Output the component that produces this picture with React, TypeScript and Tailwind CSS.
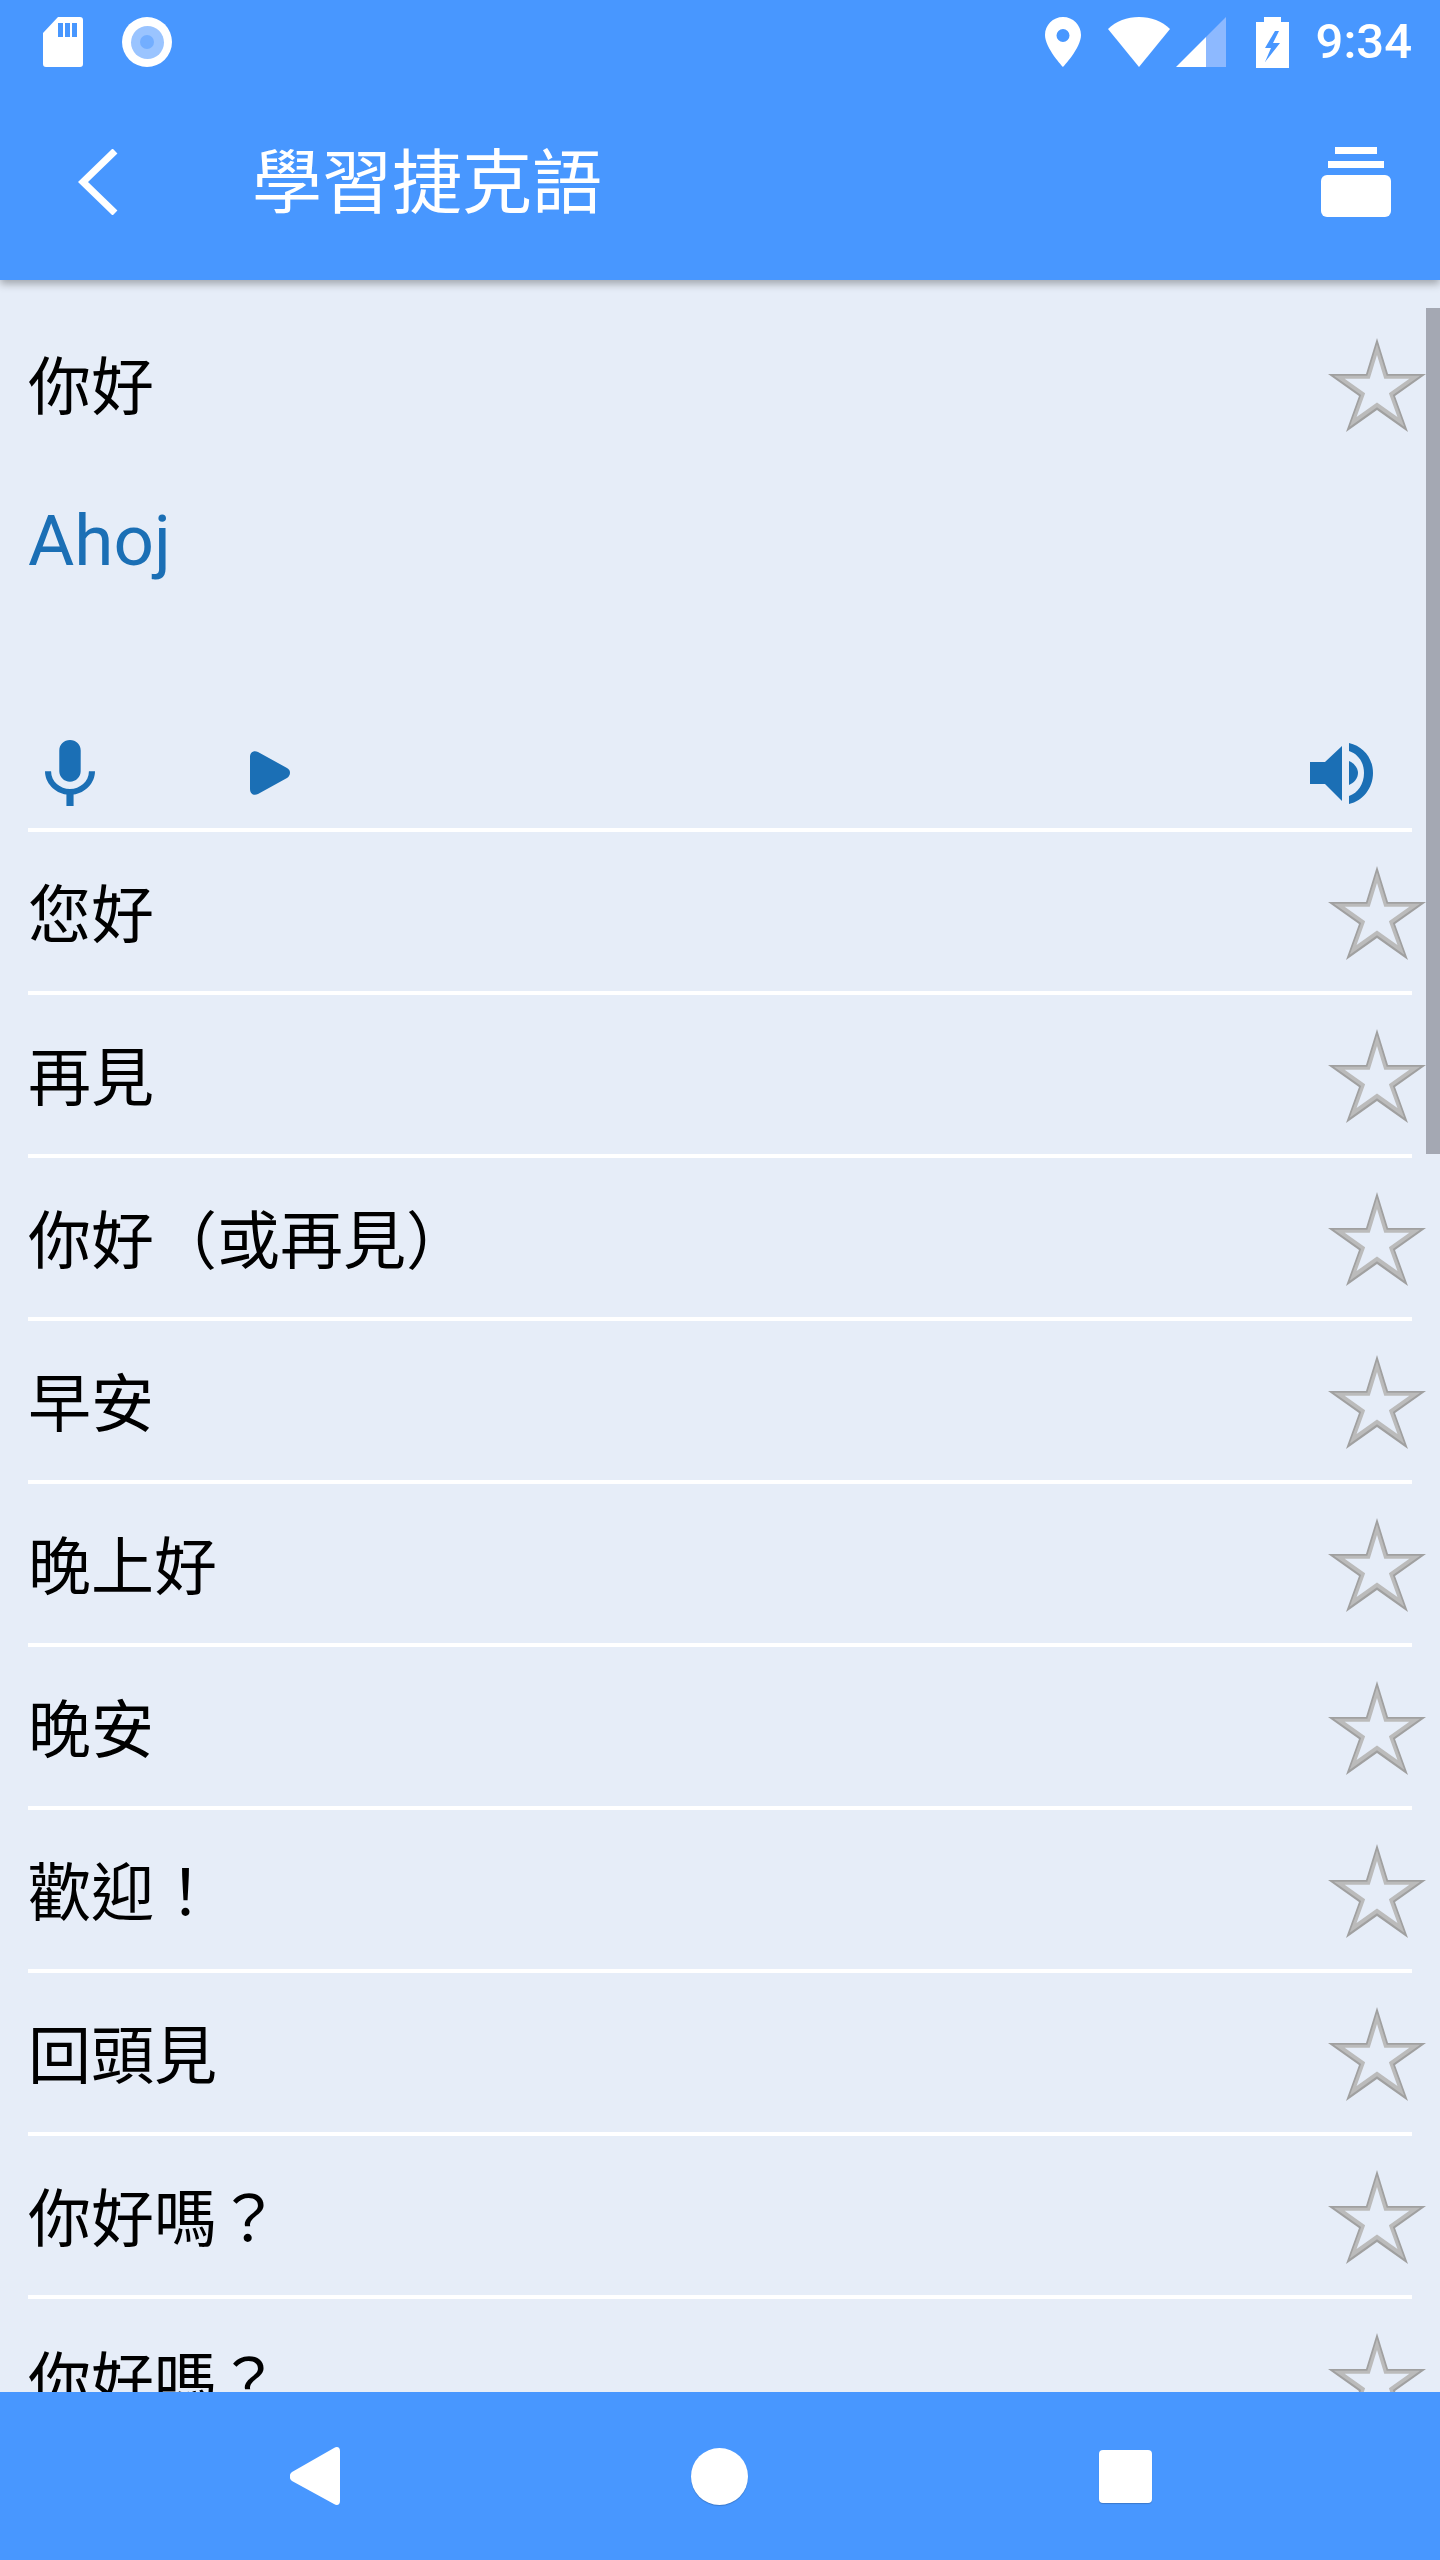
const phrases = [
  "您好",
  "再見",
  "你好（或再見）",
  "早安",
  "晚上好",
  "晚安",
  "歡迎！",
  "回頭見",
  "你好嗎？",
  "你好嗎？",
];

const starPoints = "49,0 60,36 98,36 67,58 80,94 49,72 18,94 31,58 0,36 38,36";

const Star = () => (
  <svg width="98" height="94" viewBox="0 0 98 94" className="-mr-[14px] shrink-0">
    <polygon points={starPoints} fill="#a0a0a0" />
    <polygon points={starPoints} fill="#bbbbbb" transform="translate(49 50) scale(0.88) translate(-49 -50)" />
    <polygon points={starPoints} fill="#e6edf8" transform="translate(49 50) scale(0.66) translate(-49 -50)" />
  </svg>
);

const StatusBar = () => (
  <div className="flex h-[84px] items-start pl-[43px] pr-[28px] pt-[17px]">
    <svg width="40" height="50" viewBox="0 0 40 50">
      <path
        fillRule="evenodd"
        fill="#fff"
        d="M15 0H37a3 3 0 0 1 3 3V47a3 3 0 0 1-3 3H3a3 3 0 0 1-3-3V16ZM15 6v14h5V6ZM22 6v14h5V6ZM29 6v14h5V6Z"
      />
    </svg>
    <div className="ml-[39px] flex size-[50px] items-center justify-center rounded-full bg-white">
      <div className="flex size-[33px] items-center justify-center rounded-full bg-[#9ac4ff]">
        <div className="size-[14px] rounded-full bg-[#73aeff]" />
      </div>
    </div>
    <div className="flex-1" />
    <svg width="36" height="50" viewBox="0 0 36 50">
      <path
        fillRule="evenodd"
        fill="#fff"
        d="M18 0C8 0 0 8 0 18c0 13 18 32 18 32s18-19 18-32C36 8 28 0 18 0ZM18 12a6.500 6.500 0 1 1 0 13a6.500 6.500 0 1 1 0-13Z"
      />
    </svg>
    <svg width="62" height="50" viewBox="0 0 62 50" className="ml-[27px]">
      <path fill="#fff" d="M31 50L0 12C8 4 19 0 31 0s23 4 31 12Z" />
    </svg>
    <svg width="50" height="50" viewBox="0 0 50 50" className="ml-[6px]">
      <path fill="#8db9ff" d="M50 0V50H30V20Z" />
      <path fill="#fff" d="M30 20V50H0Z" />
    </svg>
    <svg width="33" height="51" viewBox="0 0 33 51" className="ml-[30px]">
      <path
        fillRule="evenodd"
        fill="#fff"
        d="M8 0H25V5H33V51H0V5H8ZM19 14L9 31H15L9 45L24 26H17L23 14Z"
      />
    </svg>
    <span className="ml-[27px] font-['Roboto',sans-serif] text-[49px] leading-[50px] font-medium text-white">
      9:34
    </span>
  </div>
);

const Toolbar = () => (
  <div className="flex h-[196px] items-center pl-[78px] pr-[49px]">
    <svg width="40" height="66" viewBox="0 0 40 66">
      <path d="M37 2L5 33l32 31" fill="none" stroke="#fff" strokeWidth="7" />
    </svg>
    <h1 className="-mt-[8px] ml-[134px] font-['Noto_Sans_CJK_TC',sans-serif] text-[70px] leading-none font-normal text-white">
      學習捷克語
    </h1>
    <div className="ml-auto flex w-[70px] flex-col items-center gap-[7px]">
      <div className="h-[7px] w-[42px] bg-white" />
      <div className="h-[7px] w-[56px] bg-white" />
      <div className="h-[42px] w-[70px] rounded-[6px] bg-white" />
    </div>
  </div>
);

const PhraseRow = ({ text }: { text: string }) => (
  <div className="flex h-[163px] shrink-0 items-center justify-between border-b-4 border-white pt-[3px]">
    <span className="-mt-[7px] font-['Noto_Sans_CJK_TC',sans-serif] text-[63px] leading-none text-black">{text}</span>
    <Star />
  </div>
);

const App = () => {
  return (
    <div className="flex h-[2560px] w-[1440px] flex-col overflow-hidden bg-[#e6edf8]">
      <header className="relative z-10 h-[280px] shrink-0 bg-[#4897ff] shadow-[0_4px_8px_rgba(0,0,0,0.3)]">
        <StatusBar />
        <Toolbar />
      </header>

      <main className="relative flex min-h-0 flex-1 flex-col overflow-hidden px-[28px]">
        <div className="absolute right-0 top-[28px] h-[846px] w-[14px] bg-[#a4a8b3]" />

        <section className="flex h-[552px] shrink-0 flex-col border-b-4 border-white pt-[58px]">
          <div className="flex h-[94px] items-center justify-between">
            <span className="-mt-[7px] font-['Noto_Sans_CJK_TC',sans-serif] text-[63px] leading-none text-black">你好</span>
            <Star />
          </div>
          <p className="mt-[73px] font-['Roboto',sans-serif] text-[71px] leading-none text-[#1b6fb5]">Ahoj</p>
          <div className="mt-auto flex items-center pb-[22px] pl-[17px] pr-[39px]">
            <svg width="50" height="66" viewBox="5 2 14 19" preserveAspectRatio="none">
              <path
                fill="#1b6fb5"
                d="M12 14c1.660 0 2.990-1.340 2.990-3L15 5c0-1.660-1.340-3-3-3S9 3.340 9 5v6c0 1.660 1.340 3 3 3zm5.300-3c0 3-2.540 5.100-5.300 5.100S6.700 14 6.700 11H5c0 3.410 2.720 6.230 6 6.720V21h2v-3.280c3.280-.48 6-3.300 6-6.720h-1.700z"
              />
            </svg>
            <svg width="40" height="44" viewBox="0 0 40 44" className="ml-[155px]">
              <path
                fill="#1b6fb5"
                d="M0 6C0 1 4-1 8 1l29 16c4 2 4 7 0 10L8 43c-4 2-8 0-8-5Z"
              />
            </svg>
            <svg width="63" height="61" viewBox="0 0 63 61" className="ml-auto">
              <path fill="#1b6fb5" d="M0 19H15L32 3V58L15 41H0Z" />
              <path fill="#1b6fb5" d="M39 18c5 2 9 7 9 12s-4 10-9 12Z" />
              <path fill="#1b6fb5" d="M39 0c14 3 24 15 24 30s-10 28-24 31V53c9-3 15-12 15-23S48 11 39 8Z" />
            </svg>
          </div>
        </section>

        {phrases.map((text, i) => (
          <PhraseRow key={i} text={text} />
        ))}
      </main>

      <nav className="flex h-[168px] shrink-0 items-center gap-[351px] bg-[#4897ff] pl-[290px]">
        <svg width="50" height="58" viewBox="0 0 50 58">
          <path
            fill="#fff"
            d="M44 1c3-2 6-1 6 3V54c0 4-3 5-6 3L2 34c-3-2-3-7 0-9Z"
          />
        </svg>
        <div className="size-[57px] rounded-full bg-white shadow-[0_1px_1px_rgba(0,0,0,0.2)]" />
        <div className="size-[53px] rounded-[4px] bg-white shadow-[0_1px_1px_rgba(0,0,0,0.2)]" />
      </nav>
    </div>
  );
};

export default App;
